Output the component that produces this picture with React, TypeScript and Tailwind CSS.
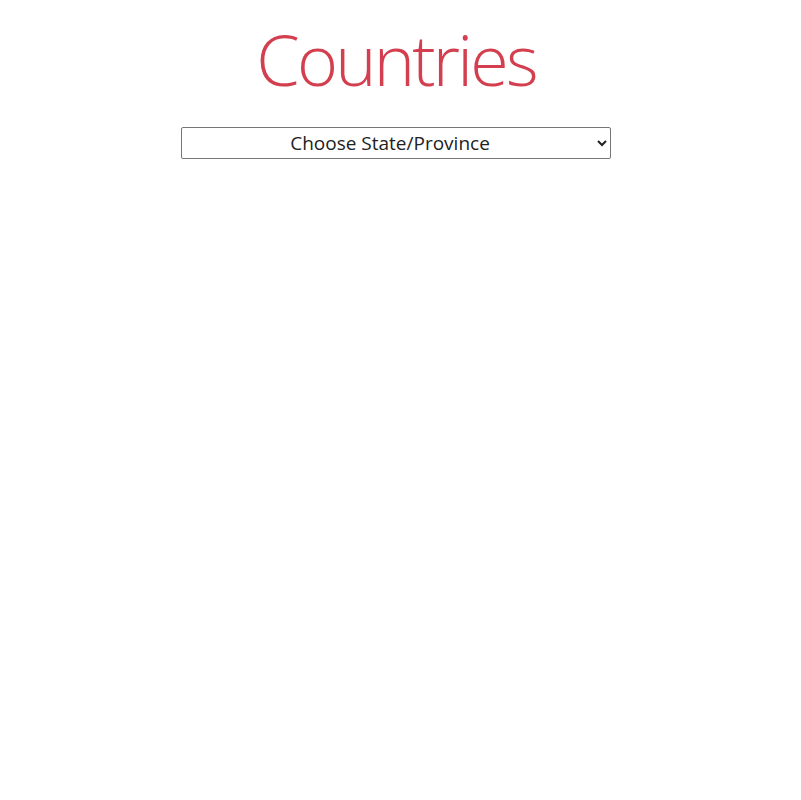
import React from 'react';

function App() {
  return (
    <div className="min-h-screen bg-white flex flex-col items-center pr-[9px]" style={{ fontFamily: '"Open Sans", sans-serif' }}>
      <h1 className="mt-[14px] text-[70px] leading-[90px] font-light text-[#d43f4f] tracking-[-2.8px]">Countries</h1>
      <select
        defaultValue=""
        className="mt-[23px] w-[430px] h-[32px] border border-[#767676] rounded-[2px] bg-white text-[19px] text-[#222] text-center"
      >
        <option value="">Choose State/Province</option>
      </select>
    </div>
  );
}

export default App;
